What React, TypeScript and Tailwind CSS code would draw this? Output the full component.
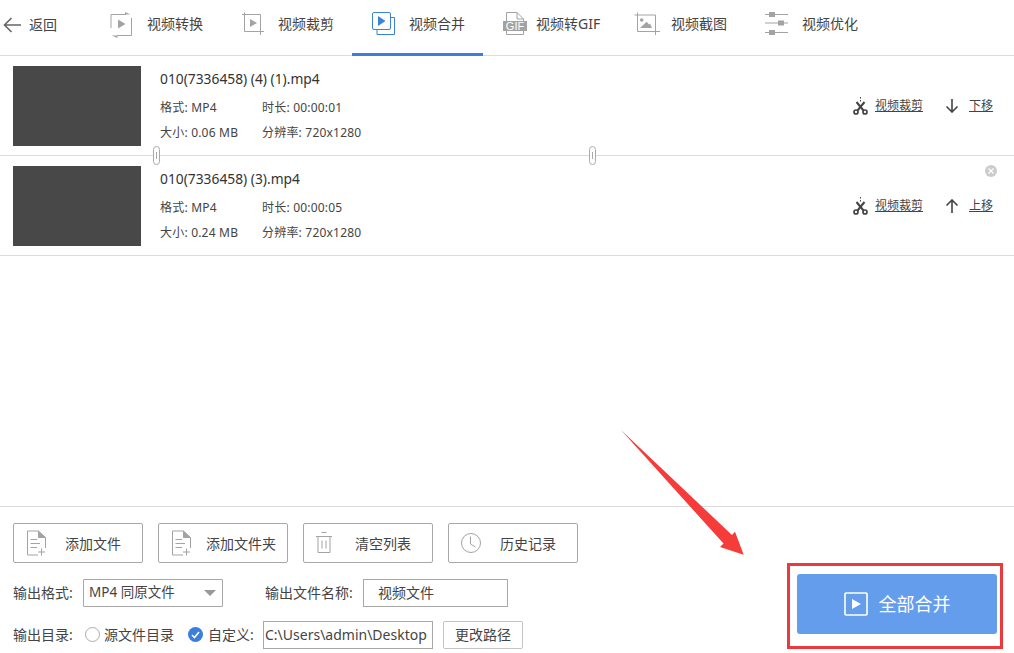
import React from "react";

function IconConvert() {
  const c = "#a3a3a3";
  return (
    <svg width="24" height="26" viewBox="0 0 24 26" fill="none" stroke={c} strokeWidth="1">
      <path d="M16 2.5H1V16" />
      <path d="M21.5 6V23.5H7" />
      <path d="M15 2.5H20.5L15 0Z" fill={c} stroke="none" />
      <path d="M7.500 23.500H1.500L7.500 26Z" fill={c} stroke="none" />
      <path d="M8 7.500L15.500 12L8 16.500Z" fill={c} stroke="none" />
    </svg>
  );
}
function IconCrop() {
  const c = "#a3a3a3";
  return (
    <svg width="24" height="26" viewBox="0 0 24 26" fill="none" stroke={c} strokeWidth="1">
      <path d="M3.5 0.5V19.5H23" />
      <path d="M1 2.5H19.5V23" />
      <path d="M9 7L16 11L9 15Z" fill={c} stroke="none" />
    </svg>
  );
}
function IconMerge() {
  const c = "#3b82d9";
  return (
    <svg width="24" height="26" viewBox="0 0 24 26" fill="none" stroke={c} strokeWidth="1">
      <rect x="0.5" y="0.5" width="18" height="17" rx="1.5" fill="#fff" />
      <path d="M18.500 5.500H22.500V22.500H5V17.500" />
      <path d="M6 4L13.500 9L6 14Z" fill={c} stroke="none" />
    </svg>
  );
}
function IconGif() {
  const c = "#a3a3a3";
  return (
    <svg width="24" height="26" viewBox="0 0 24 26" fill="none">
      <path d="M3.500 9V0.500H14L20.500 7V9" stroke={c} />
      <path d="M14 0.500V7H20.500" stroke={c} />
      <path d="M3.500 19V22.500H20.500V19" stroke={c} />
      <rect x="0" y="9" width="24" height="10" fill={c} />
      <text x="12" y="18" textAnchor="middle" fontSize="11" fill="#fff" fontFamily="'Liberation Sans', sans-serif">GIF</text>
    </svg>
  );
}
function IconShot() {
  const c = "#a3a3a3";
  return (
    <svg width="26" height="26" viewBox="0 0 26 26" fill="none" stroke={c} strokeWidth="1">
      <path d="M3.500 0.500V19.500H26" />
      <path d="M0.500 3H21.500V23" />
      <circle cx="7.700" cy="8" r="1.800" fill={c} stroke="none" />
      <path d="M6 16L12.700 9.700L15 12.500L16 11.500L18 16Z" fill={c} stroke="none" />
    </svg>
  );
}
function IconOptimize() {
  const c = "#a3a3a3";
  return (
    <svg width="24" height="26" viewBox="0 0 24 26" fill="none" stroke={c} strokeWidth="1">
      <path d="M0 2.500H23M0 11H23M0 20.500H23" />
      <rect x="4" y="0" width="6" height="5" fill={c} stroke="none" />
      <rect x="13" y="8.500" width="6" height="5" fill={c} stroke="none" />
      <rect x="4" y="18" width="6" height="5" fill={c} stroke="none" />
    </svg>
  );
}
function IconScissors() {
  const c = "#444";
  return (
    <svg width="15" height="18" viewBox="0 0 15 18" fill="none" stroke={c}>
      <path d="M7.500 0V1.500M7.500 3V4.500" strokeWidth="1" />
      <path d="M3.500 5L10.500 13.500" strokeWidth="2" />
      <path d="M11.500 5L4.500 13.500" strokeWidth="2" />
      <circle cx="3" cy="15" r="2" strokeWidth="1.700" />
      <circle cx="12" cy="15" r="2" strokeWidth="1.700" />
    </svg>
  );
}
function IconDoc() {
  const c = "#a3a3a3";
  return (
    <svg width="20" height="26" viewBox="0 0 20 26" fill="none" stroke={c} strokeWidth="1">
      <path d="M12 25H1.500V1H12.500L19.500 7.500V18" />
      <path d="M12.500 1V7.500H19.500" fill={c} />
      <path d="M4.500 9.500H11M4.500 13.500H14M4.500 17.500H11" />
      <path d="M15.500 18.500V25.500M12 22H19" />
    </svg>
  );
}
function IconTrash() {
  const c = "#a3a3a3";
  return (
    <svg width="16" height="22" viewBox="0 0 16 22" fill="none" stroke={c} strokeWidth="1">
      <path d="M5.500 0.500H10.500M0 4.500H16" />
      <path d="M2 4.500V20.500H14V4.500" />
      <path d="M6 8.500V16.500M10 8.500V16.500" />
    </svg>
  );
}
function IconClock() {
  const c = "#a3a3a3";
  return (
    <svg width="22" height="22" viewBox="0 0 22 22" fill="none" stroke={c} strokeWidth="1">
      <circle cx="11" cy="11" r="9.500" />
      <path d="M10.500 4.500V12L15.500 15" />
    </svg>
  );
}

const tabs = [
  { label: "视频转换", icon: <IconConvert />, w: "w-[37px]" },
  { label: "视频裁剪", icon: <IconCrop />, w: "w-[37px]" },
  { label: "视频合并", icon: <IconMerge />, w: "w-[37px]" },
  { label: "视频转GIF", icon: <IconGif />, w: "w-[33px]" },
  { label: "视频截图", icon: <IconShot />, w: "w-[37px]" },
  { label: "视频优化", icon: <IconOptimize />, w: "w-[37px]" },
];

function Row({ name, dur, size, move, up, close, links }: { name: string; dur: string; size: string; move: string; up?: boolean; close?: boolean; links?: boolean }) {
  return (
    <div className="relative flex h-[100px] items-start border-b border-[#dcdcdc] pl-[13px] pt-[10px]">
      <div className="h-[80px] w-[128px] shrink-0 bg-[#484848]" />
      <div className="ml-[19px] text-[#444444]">
        <div className="mt-[3px] h-[20px] text-[13.800px] leading-[20px] text-[#333333]">{name}</div>
        <div className="mt-[10px] flex h-[18px] items-center text-[12px] leading-[18px] tracking-[0.2px]">
          <span className="w-[102px]">格式: MP4</span>
          <span>时长: {dur}</span>
        </div>
        <div className="mt-[7px] flex h-[18px] items-center text-[12px] leading-[18px] tracking-[0.2px]">
          <span className="w-[102px]">大小: {size}</span>
          <span>分辨率: 720x1280</span>
        </div>
      </div>
      <div className="ml-auto mr-[21px] mt-[31px] flex h-[18px] items-center text-[12px] leading-[18px] text-[#444444]">
        <IconScissors />
        <span className="ml-[7px] underline">视频裁剪</span>
        <svg className="ml-[22px]" width="14" height="14" viewBox="0 0 14 14" fill="none" stroke="#444" strokeWidth="1.600">
          {up ? <path d="M7 14V1M1.500 6.500L7 1L12.500 6.500" /> : <path d="M7 0V13M1.500 7.500L7 13L12.500 7.500" />}
        </svg>
        <span className="ml-[10px] underline">{move}</span>
      </div>
      {close && (
        <span className="absolute right-[17px] top-[9px] flex h-[12px] w-[12px] items-center justify-center rounded-full bg-[#cccccc]">
          <svg width="6" height="6" viewBox="0 0 6 6" stroke="#fff" strokeWidth="1.200"><path d="M0.500 0.500L5.500 5.500M5.500 0.500L0.500 5.500" /></svg>
        </span>
      )}
      {links && (
        <>
          <span className="absolute bottom-[-10px] left-[153px] h-[19px] w-[7px] rounded-[4px] border border-[#aaaaaa] bg-white"><span className="mx-auto mt-[5px] block h-[7px] w-px bg-[#aaaaaa]" /></span>
          <span className="absolute bottom-[-10px] left-[589px] h-[19px] w-[7px] rounded-[4px] border border-[#aaaaaa] bg-white"><span className="mx-auto mt-[5px] block h-[7px] w-px bg-[#aaaaaa]" /></span>
        </>
      )}
    </div>
  );
}

function ToolBtn({ icon, label, tight }: { icon: React.ReactNode; label: string; tight?: boolean }) {
  return (
    <div className="flex h-[40px] w-[130px] items-center rounded-[2px] border border-[#a8a8a8] bg-white text-[14px] text-[#444444]">
      <span className="flex w-[51px] shrink-0 justify-start pl-[12px]">{icon}</span>
      <span className={tight ? "ml-[-4px]" : ""}>{label}</span>
    </div>
  );
}

export default function App() {
  return (
    <div
      className="relative flex h-[653px] w-[1014px] flex-col overflow-hidden bg-white"
      style={{ fontFamily: "'Noto Sans', 'Noto Sans CJK SC', sans-serif" }}
    >
      <header className="flex h-[56px] shrink-0 items-stretch border-b border-[#dcdcdc]">
        <div className="flex w-[90px] shrink-0 items-center pl-[3px] pb-[6px] text-[14px] text-[#444444]">
          <svg width="18" height="16" viewBox="0 0 18 16" fill="none" stroke="#666" strokeWidth="1.600">
            <path d="M18 8H1.500M8.500 1L1.500 8L8.500 15" />
          </svg>
          <span className="ml-[8px]">返回</span>
        </div>
        {tabs.map((t, i) => (
          <div
            key={t.label}
            className={`flex h-[56px] w-[131px] shrink-0 items-center border-b-[3px] pb-[3px] pl-[20px] text-[14px] text-[#444444] ${i === 2 ? "border-[#3b7fdb]" : "border-transparent"}`}
          >
            <span className={`flex shrink-0 ${t.w}`}>{t.icon}</span>
            <span className="mb-[3px]">{t.label}</span>
          </div>
        ))}
      </header>

      <main className="flex-1">
        <Row name="010(7336458) (4) (1).mp4" dur="00:00:01" size="0.06 MB" move="下移" links />
        <Row name="010(7336458) (3).mp4" dur="00:00:05" size="0.24 MB" move="上移" up close />
      </main>

      <footer className="flex h-[147px] shrink-0 border-t border-[#dcdcdc]">
        <div className="pl-[13px] pt-[16px] text-[14px] text-[#444444]">
          <div className="flex gap-[15px]">
            <ToolBtn icon={<IconDoc />} label="添加文件" />
            <ToolBtn icon={<IconDoc />} label="添加文件夹" tight />
            <ToolBtn icon={<IconTrash />} label="清空列表" />
            <ToolBtn icon={<span className="ml-[-1px] flex"><IconClock /></span>} label="历史记录" />
          </div>
          <div className="mt-[15px] flex h-[29px] items-center">
            <span className="w-[70px]">输出格式:</span>
            <div className="flex h-[28px] w-[140px] items-center justify-between rounded-[1px] border border-[#a8a8a8] pl-[5px] pr-[6px]">
              <span className="text-[13.500px]">MP4 同原文件</span>
              <span className="h-0 w-0 border-x-[6px] border-t-[6px] border-x-transparent border-t-[#999999]" />
            </div>
            <span className="ml-[42px] w-[98px]">输出文件名称:</span>
            <div className="flex h-[28px] w-[145px] items-center border border-[#a8a8a8] pl-[14px]">视频文件</div>
          </div>
          <div className="mt-[13px] flex h-[29px] items-center">
            <span className="w-[72px]">输出目录:</span>
            <span className="h-[15px] w-[15px] rounded-full border border-[#aaaaaa]" />
            <span className="ml-[4px]">源文件目录</span>
            <span className="ml-[14px] flex h-[15px] w-[15px] items-center justify-center rounded-full bg-[#3b7fdb]">
              <svg width="9" height="8" viewBox="0 0 9 8" fill="none" stroke="#fff" strokeWidth="1.600"><path d="M1 4L3.500 6.500L8 1" /></svg>
            </span>
            <span className="ml-[5px] w-[55px]">自定义:</span>
            <div className="flex h-[28px] w-[170px] items-center overflow-hidden whitespace-nowrap border border-[#a8a8a8] pl-[1px] text-[14px]">C:\Users\admin\Desktop</div>
            <div className="ml-[10px] flex h-[28px] w-[80px] items-center justify-center rounded-[2px] border border-[#c4c4c4]">更改路径</div>
          </div>
        </div>
        <div className="ml-auto mr-[17px] mt-[67px] flex h-[60px] w-[200px] items-center justify-center rounded-[3px] bg-[#659ded] text-[18px] text-white">
          <svg width="24" height="24" viewBox="0 0 24 24" fill="none" stroke="#fff" strokeWidth="1.600">
            <rect x="1" y="1" width="22" height="22" rx="1" />
            <path d="M8 7L17 12L8 17Z" fill="#fff" stroke="none" />
          </svg>
          <span className="ml-[11px]">全部合并</span>
        </div>
      </footer>

      <div className="pointer-events-none absolute left-[787px] top-[563px] h-[86px] w-[216px] border-[3px] border-[#ea3a3d]" />
      <svg className="pointer-events-none absolute left-[615px] top-[425px]" width="135" height="135" viewBox="0 0 135 135">
        <path d="M6 5L117 110L120 106.700L128.700 129.700L105 122L108.500 118.500Z" fill="#f63b3b" />
      </svg>
    </div>
  );
}
